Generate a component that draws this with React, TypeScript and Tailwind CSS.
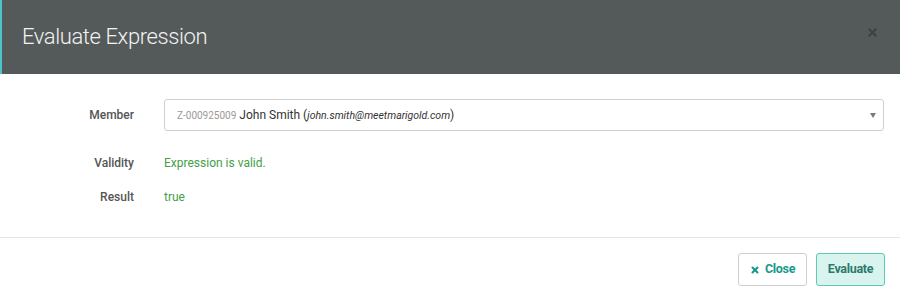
import { X } from 'lucide-react';

export default function App() {
  return (
    <div className="h-[302px] w-[900px] overflow-hidden bg-white font-['Roboto',sans-serif]">
      <div className="flex h-[74px] items-center justify-between border-l-2 border-[#4fc3c8] bg-[#545a5a] pl-[20px] pr-[21px]">
        <h1 className="text-[22px] font-light leading-none tracking-[-0.4px] text-[#f2f2f2]">Evaluate Expression</h1>
        <button type="button" className="-mt-[10px] text-[#3c4242]" aria-label="Close">
          <X className="h-[13px] w-[13px]" strokeWidth={3.5} />
        </button>
      </div>

      <div className="pt-[25px] pb-[30px] pr-[16px]">
        <div className="flex items-center">
          <div className="w-[134px] text-right text-[12px] font-medium text-[#555]">Member</div>
          <div className="ml-[30px] flex h-[32px] flex-1 items-center justify-between rounded-[3px] border border-[#cfcfcf] bg-white pl-[12px] pr-[7px]">
            <div className="flex items-baseline whitespace-nowrap text-[#333]">
              <span className="text-[10px] text-[#9a9a9a]">Z-000925009</span>
              <span className="ml-[3px] text-[12px]">John Smith (</span>
              <span className="text-[10.5px] italic">john.smith@meetmarigold.com</span>
              <span className="text-[12px]">)</span>
            </div>
            <span className="h-0 w-0 border-x-[3.5px] border-t-[5px] border-x-transparent border-t-[#7a7a7a]" />
          </div>
        </div>

        <div className="mt-[22px] flex h-[20px] items-center">
          <div className="w-[134px] text-right text-[12px] font-medium text-[#555]">Validity</div>
          <div className="ml-[30px] text-[12px] text-[#43a047]">Expression is valid.</div>
        </div>

        <div className="mt-[14px] flex h-[20px] items-center">
          <div className="w-[134px] text-right text-[12px] font-medium text-[#555]">Result</div>
          <div className="ml-[30px] text-[12px] text-[#43a047]">true</div>
        </div>
      </div>

      <div className="flex justify-end gap-[9px] border-t border-[#e5e5e5] pt-[15px] pr-[15px]">
        <button
          type="button"
          className="flex h-[33px] w-[69px] items-center justify-center gap-[5px] rounded-[3px] border border-[#cfcfcf] bg-white text-[12.5px] font-bold tracking-tight text-[#17998a]"
        >
          <X className="h-[10px] w-[10px]" strokeWidth={5} />
          Close
        </button>
        <button
          type="button"
          className="flex h-[33px] w-[69px] items-center justify-center rounded-[3px] border border-[#5ccab6] bg-[#d9f4ee] text-[12.5px] font-bold tracking-tight text-[#2b7a6c]"
        >
          Evaluate
        </button>
      </div>
    </div>
  );
}
